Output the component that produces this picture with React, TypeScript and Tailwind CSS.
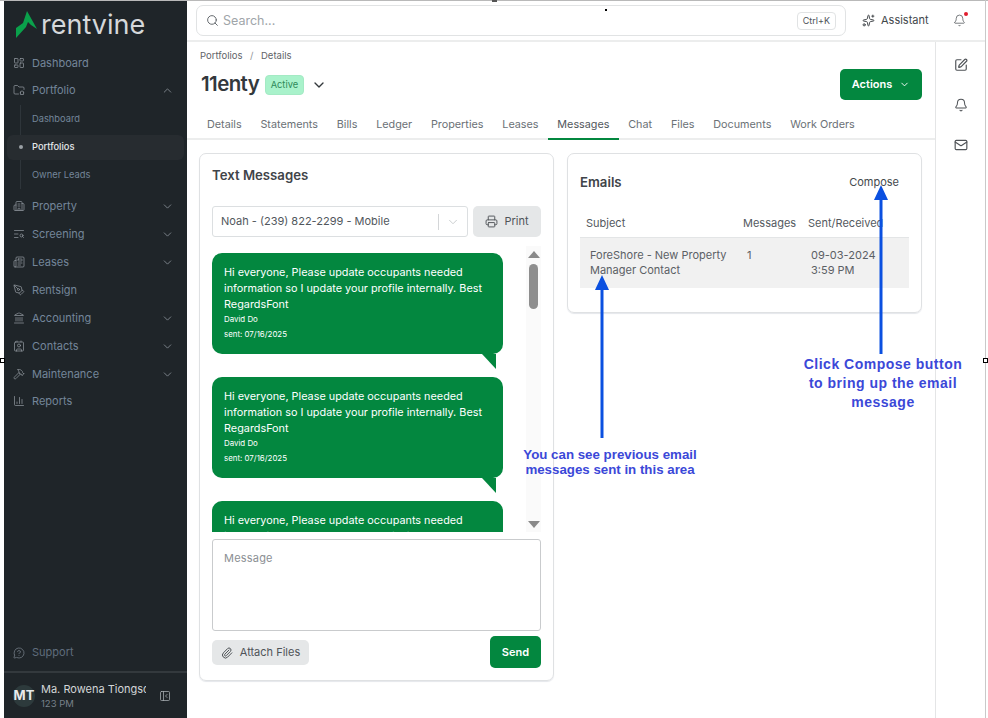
import {
  Bell,
  Building2,
  ChartColumn,
  ChevronDown,
  ChevronUp,
  Contact,
  Hammer,
  Landmark,
  LayoutDashboard,
  Mail,
  MessageCircleQuestion,
  Newspaper,
  PanelLeftClose,
  Paperclip,
  PenTool,
  Printer,
  Search,
  SquarePen,
  Sparkles,
  TextSearch,
} from "lucide-react";
import type { ComponentType } from "react";

type IconType = ComponentType<{ className?: string; strokeWidth?: number }>;

// folder with a small house in the corner, lucide has no such icon
function FolderHome({ className, strokeWidth }: { className?: string; strokeWidth?: number }) {
  return (
    <svg viewBox="0 0 24 24" fill="none" stroke="currentColor" strokeWidth={strokeWidth} strokeLinecap="round" strokeLinejoin="round" className={className}>
      <path d="M11 20H4a2 2 0 0 1-2-2V5a2 2 0 0 1 2-2h5l3 3h8a2 2 0 0 1 2 2v3" />
      <path d="M14 17l4-3.5 4 3.5M15 16v5h6v-5" />
    </svg>
  );
}

const topNav: { label: string; icon: IconType; arrow?: boolean }[] = [
  { label: "Property", icon: Building2, arrow: true },
  { label: "Screening", icon: TextSearch, arrow: true },
  { label: "Leases", icon: Newspaper, arrow: true },
  { label: "Rentsign", icon: PenTool },
  { label: "Accounting", icon: Landmark, arrow: true },
  { label: "Contacts", icon: Contact, arrow: true },
  { label: "Maintenance", icon: Hammer, arrow: true },
  { label: "Reports", icon: ChartColumn },
];

const tabs = ["Details", "Statements", "Bills", "Ledger", "Properties", "Leases", "Messages", "Chat", "Files", "Documents", "Work Orders"];

function NavRow({ label, icon: Icon, arrow, up }: { label: string; icon: IconType; arrow?: boolean; up?: boolean }) {
  return (
    <div className="flex h-7 items-center pl-[9px] pr-[13px] text-[11px] text-[#74859a] last:-mt-px">
      <Icon className="mr-[7px] h-[12px] w-[12px] shrink-0 text-[#8d949b]" strokeWidth={1.5} />
      <span className="flex-1">{label}</span>
      {arrow && <ChevronDown className="h-[13px] w-[13px] text-[#8d949b]" strokeWidth={1.5} />}
      {up && <ChevronUp className="h-[13px] w-[13px] text-[#8d949b]" strokeWidth={1.5} />}
    </div>
  );
}

function Sidebar() {
  return (
    <aside className="flex h-full w-[183px] shrink-0 flex-col bg-[#1f2529]">
      <div className="flex h-[47px] items-center pl-3">
        <svg viewBox="0 0 22 28" className="h-[28px] w-[22px]">
          <polygon points="11,0 21,18 15,14 12,11 10,16 0,27 0,17 7,12" fill="#0aa14b" />
        </svg>
        <span className="ml-[3px] text-[27px] leading-none text-[#d5d8da]">rentvine</span>
      </div>
      <div className="mt-[1px]">
        <NavRow label="Dashboard" icon={LayoutDashboard} />
        <NavRow label="Portfolio" icon={FolderHome} up />
      </div>
      <div className="relative mt-px text-[9.3px] text-[#74859a]">
        <div className="absolute left-[16px] top-0 h-[84px] w-px bg-[#2e353a]" />
        <div className="flex h-7 items-center pl-[28px]">Dashboard</div>
        <div className="relative mx-[3px] my-[1.5px] flex h-[25px] items-center rounded-md bg-[#272c30] pl-[25px] font-medium text-[#e3e6e8]">
          <span className="absolute left-[12px] h-[4px] w-[4px] rounded-full bg-[#9aa0a5]" />
          Portfolios
        </div>
        <div className="flex h-7 items-center pl-[28px]">Owner Leads</div>
      </div>
      <div className="mt-[3px]">
        {topNav.map((n) => (
          <NavRow key={n.label} {...n} />
        ))}
      </div>
      <div className="mt-auto">
        <div className="flex h-[37px] items-center pl-[9px] text-[11px] text-[#5f6d7c]">
          <MessageCircleQuestion className="mr-[7px] h-[12px] w-[12px] text-[#77808a]" strokeWidth={1.5} />
          Support
        </div>
        <div className="flex h-[47px] items-center border-t-2 border-[#33393d] pl-[9px]">
          <div className="flex h-[22px] w-[22px] shrink-0 items-center justify-center rounded-full bg-[#2d3a3c] text-[13px] font-bold text-[#e8eaeb]">MT</div>
          <div className="ml-[6px] w-[105px] overflow-hidden">
            <div className="whitespace-nowrap text-[11px] leading-[15px] text-[#d2d5d7]">Ma. Rowena Tiongson</div>
            <div className="text-[9.5px] leading-[13px] text-[#78818a]">123 PM</div>
          </div>
          <PanelLeftClose className="ml-[13px] h-[12px] w-[12px] text-[#aab0b4]" strokeWidth={1.5} />
        </div>
      </div>
    </aside>
  );
}

function Bubble() {
  return (
    <div className="relative mb-[23px] h-[101px] rounded-[10px] bg-[#03873f] px-3 pt-[11px] text-white">
      <p className="text-[10.85px] leading-[16px]">Hi everyone, Please update occupants needed information so I update your profile internally. Best RegardsFont</p>
      <p className="mt-px text-[7.9px] leading-[12px]">David Do</p>
      <p className="mt-[3px] text-[7.9px] leading-[12px]">sent: 07/16/2025</p>
      <svg viewBox="0 0 14 15" className="absolute right-[7px] top-full h-[15px] w-[14px]">
        <polygon points="0,0 14,0 14,15" fill="#03873f" />
      </svg>
    </div>
  );
}

function TextMessages() {
  return (
    <section className="h-[528px] w-[355px] shrink-0 rounded-[7px] border border-[#dfe1e3] px-[12px] shadow-[0_1px_1px_#e5e7eb]">
      <h2 className="mt-[11px] text-[13.2px] leading-[20px] font-semibold text-[#3f4449]">Text Messages</h2>
      <div className="mt-[21px] flex h-[31px] gap-[5px]">
        <div className="flex w-[256px] items-center rounded-[3px] border border-[#dcdfe1] pl-2 text-[11px] text-[#51575c]">
          <span className="flex-1">Noah - (239) 822-2299 - Mobile</span>
          <span className="h-[16px] w-px bg-[#d4d6d8]" />
          <ChevronDown className="mx-[7px] h-[14px] w-[14px] text-[#c4c7c9]" strokeWidth={1.5} />
        </div>
        <div className="flex w-[68px] items-center justify-center gap-[6px] rounded-[5px] bg-[#e5e7e8] text-[11px] text-[#4f5458]">
          <Printer className="h-[13px] w-[13px]" strokeWidth={1.75} />
          Print
        </div>
      </div>
      <div className="mt-[9px] flex h-[286px] justify-between overflow-hidden">
        <div className="h-full w-[291px] overflow-hidden pt-[7px]">
          <Bubble />
          <Bubble />
          <Bubble />
        </div>
        <div className="relative h-full w-[15px] bg-[#fafafa]">
          <div className="absolute left-[2px] top-[5px] h-0 w-0 border-x-[6px] border-b-[7px] border-x-transparent border-b-[#8a8a8a]" />
          <div className="absolute left-[3px] top-[18px] h-[45px] w-[9px] rounded-full bg-[#8e8e8e]" />
          <div className="absolute bottom-[4px] left-[2px] h-0 w-0 border-x-[6px] border-t-[7px] border-x-transparent border-t-[#8a8a8a]" />
        </div>
      </div>
      <div className="mt-[7px] h-[92px] rounded-[3px] border border-[#c9cbcd] px-[11px] py-[10px] text-[11px] leading-[16px] tracking-[0.2px] text-[#8b8f93]">Message</div>
      <div className="mt-[5px] flex h-[32px] items-center justify-between">
        <div className="mt-px flex h-[25px] w-[97px] items-center justify-center gap-[7px] rounded-[5px] bg-[#e5e7e8] text-[11px] text-[#4f5458]">
          <Paperclip className="h-[12px] w-[12px]" strokeWidth={2} />
          Attach Files
        </div>
        <div className="flex h-[32px] w-[51px] items-center justify-center rounded-[5px] bg-[#03873f] text-[11px] font-semibold text-white">Send</div>
      </div>
    </section>
  );
}

function Emails() {
  return (
    <section className="h-[160px] w-[355px] shrink-0 rounded-[7px] border border-[#dfe1e3] px-[12px] shadow-[0_1px_1px_#e5e7eb]">
      <div className="mt-[18px] flex items-center justify-between pr-[10px]">
        <h2 className="text-[13.2px] leading-[20px] font-semibold text-[#3f4449]">Emails</h2>
        <span className="text-[11px] text-[#44494d]">Compose</span>
      </div>
      <div className="mt-[21px] flex h-[25px] items-center border-b border-[#e3e5e6] pb-[3px] text-[11px] text-[#54595e]">
        <span className="w-[163px] pl-[6px]">Subject</span>
        <span className="w-[65px]">Messages</span>
        <span>Sent/Received</span>
      </div>
      <div className="flex h-[50px] items-center bg-[#f1f1f1] text-[11px] leading-[15px] text-[#5b6065]">
        <span className="w-[166px] pl-[10px]">ForeShore - New Property Manager Contact</span>
        <span className="w-[65px] self-start pl-px pt-[10px]">1</span>
        <span>
          09-03-2024
          <br />
          3:59 PM
        </span>
      </div>
    </section>
  );
}

function Main() {
  return (
    <main className="flex min-w-0 flex-1 flex-col">
      <header className="flex h-[41px] shrink-0 items-center border-b-2 border-[#eceded] pl-[9px]">
        <div className="flex h-[31px] w-[650px] items-center rounded-[7px] border border-[#e1e3e4] px-[9px]">
          <Search className="h-[13px] w-[13px] text-[#5d6267]" strokeWidth={1.75} />
          <span className="ml-[4px] flex-1 pt-[1px] text-[12.5px] text-[#a0a5a9]">Search...</span>
          <span className="rounded-[4px] border border-[#e1e3e4] px-[5px] py-[1px] text-[9px] leading-[14px] text-[#4e5357]">Ctrl+K</span>
        </div>
        <Sparkles className="ml-[16px] h-[13px] w-[13px] text-[#3d4246]" strokeWidth={1.75} />
        <span className="ml-[6px] text-[11px] text-[#42474b]">Assistant</span>
        <div className="relative ml-[24px]">
          <Bell className="h-[13px] w-[13px] text-[#5a5f63]" strokeWidth={1.5} />
          <span className="absolute -right-[2px] -top-[2px] h-[4px] w-[4px] rounded-full bg-[#e11d2e]" />
        </div>
      </header>
      <div className="flex min-h-0 flex-1">
        <div className="min-w-0 flex-1">
          <div className="px-[13px]">
            <div className="mt-[8px] text-[9.5px] leading-[12px] text-[#5f6468]">
              Portfolios<span className="mx-[7.5px] text-[#8f9497]">/</span>Details
            </div>
            <div className="mt-[7px] flex h-[31px] items-center justify-between">
              <div className="flex items-center">
                <h1 className="-mt-[1px] ml-px text-[20.5px] leading-[30px] font-semibold tracking-[-0.6px] text-[#33383c]">11enty</h1>
                <span className="ml-[6px] flex h-[20px] items-center rounded-[4px] border border-[#a4eac4] bg-[#a9f2cb] px-[4.5px] text-[9.3px] text-[#2f8a5a]">Active</span>
                <ChevronDown className="ml-[7px] h-[16px] w-[16px] text-[#33383c]" strokeWidth={2} />
              </div>
              <div className="flex h-[31px] w-[82px] items-center justify-center gap-[7px] rounded-[5px] bg-[#03873f] text-[11px] font-semibold text-white">
                Actions
                <ChevronDown className="h-[11px] w-[11px]" strokeWidth={2} />
              </div>
            </div>
          </div>
          <nav className="mt-[8px] flex h-[32px] items-stretch border-b-2 border-[#eceded] pl-[10.6px] text-[10.8px] text-[#6b7176]">
            {tabs.map((t) => (
              <span key={t} className={`-mb-[2px] flex items-center px-[9.4px] ${t === "Messages" ? "border-b-2 border-[#03873f] pt-[4px] text-[#52575b]" : "pt-[2px]"}`}>
                {t}
              </span>
            ))}
          </nav>
          <div className="mt-[13px] flex gap-[13px] pl-[12px]">
            <TextMessages />
            <Emails />
          </div>
        </div>
        <div className="flex w-[50px] shrink-0 flex-col items-center gap-[26px] border-l border-[#e4e5e6] pt-[16px] text-[#4f5357]">
          <SquarePen className="h-[14px] w-[14px]" strokeWidth={2} />
          <Bell className="h-[14px] w-[14px]" strokeWidth={1.75} />
          <Mail className="h-[14px] w-[14px]" strokeWidth={2} />
        </div>
      </div>
    </main>
  );
}

export default function App() {
  return (
    <div className="relative h-[718px] w-[988px] overflow-hidden bg-white [font-family:Inter,sans-serif]">
      <div className="absolute inset-x-0 top-0 h-px bg-[#b9b9b9]" />
      <div className="flex h-full pl-[4px] pr-[3px] pt-px">
        <Sidebar />
        <Main />
      </div>
      <div className="absolute bottom-0 right-[2px] top-0 w-px bg-[#c9c9c9]" />

      {/* annotations drawn over the screenshot */}
      <svg className="pointer-events-none absolute inset-0 h-full w-full" viewBox="0 0 988 718">
        <path d="M602 288V438" stroke="#0b50e0" strokeWidth="3" />
        <polygon points="602,275 595,290 609,290" fill="#0b50e0" />
        <path d="M881 198V354" stroke="#0b50e0" strokeWidth="3" />
        <polygon points="881,185 874,200 888,200" fill="#0b50e0" />
      </svg>
      <div className="absolute left-[510px] top-[447px] w-[200px] text-center text-[13.3px] leading-[15px] font-bold text-[#3b48d8] [font-family:'Liberation_Sans',sans-serif]">
        You can see previous email
        <br />
        messages sent in this area
      </div>
      <div className="absolute left-[783px] top-[355px] w-[200px] text-center text-[14px] leading-[19px] font-bold tracking-[0.5px] text-[#3b48d8] [font-family:'Liberation_Sans',sans-serif]">
        Click Compose button
        <br />
        to bring up the email
        <br />
        message
      </div>

      {/* selection handles */}
      <div className="absolute left-0 top-[358px] h-[5px] w-[5px] border border-black bg-white" />
      <div className="absolute right-0 top-[358px] h-[5px] w-[5px] border border-black bg-white" />
      <div className="absolute left-[492px] top-0 h-[2px] w-[5px] bg-[#555555]" />
      <div className="absolute left-[605px] top-[9px] h-[2px] w-[2px] bg-black" />
    </div>
  );
}
